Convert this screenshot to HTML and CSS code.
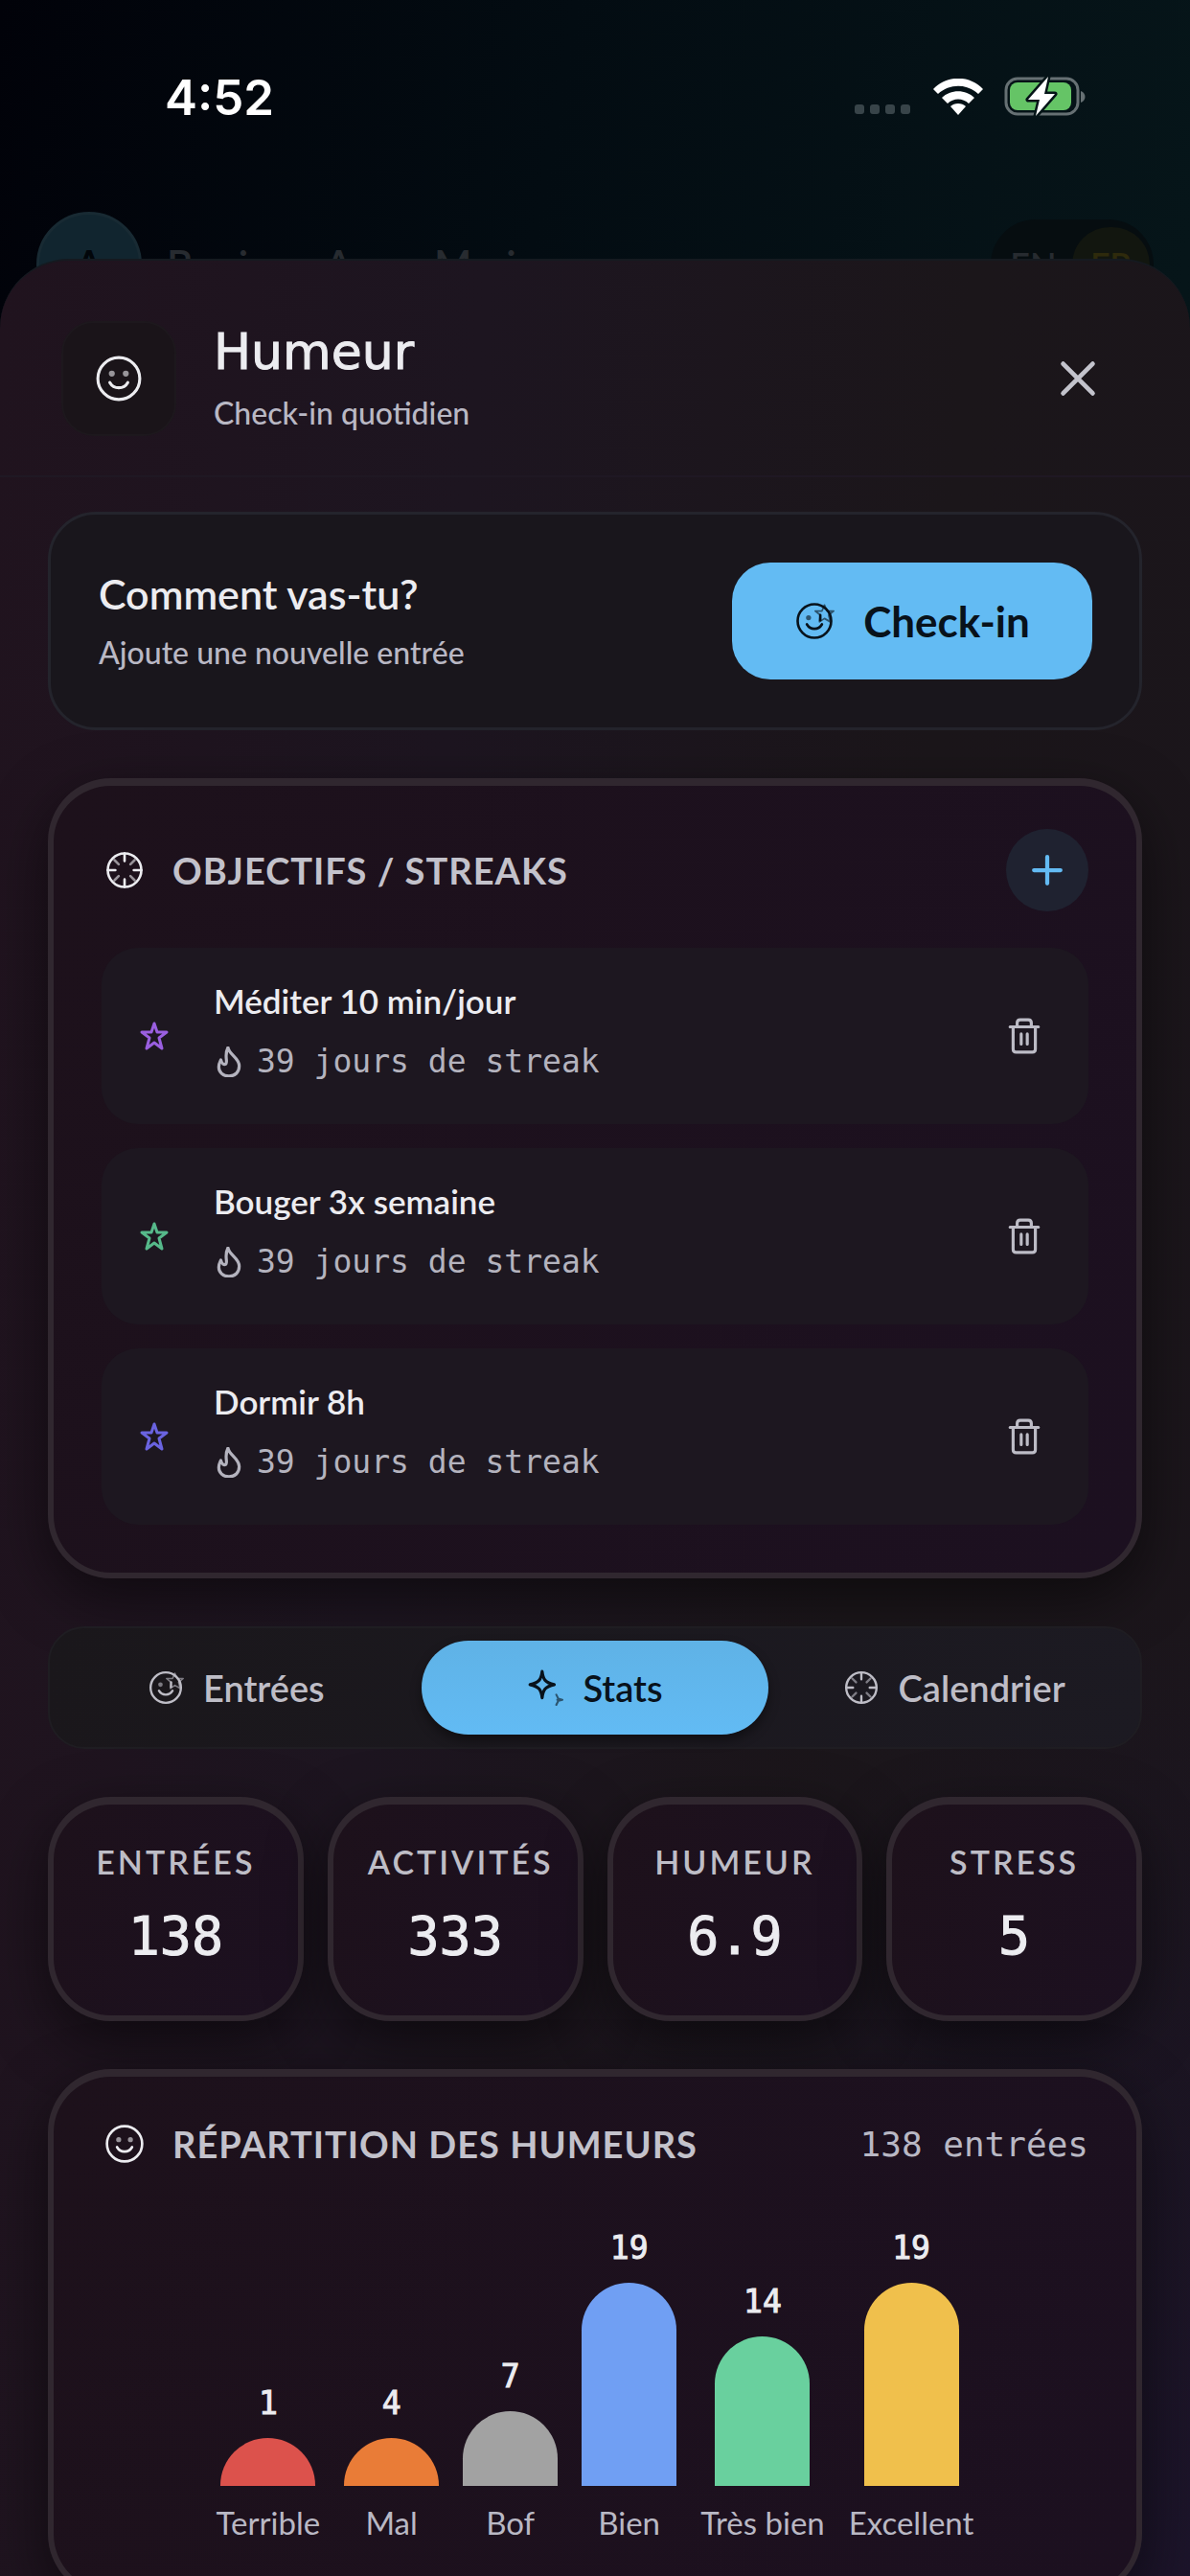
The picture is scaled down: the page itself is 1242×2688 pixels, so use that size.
FILE: index.html
```html
<!DOCTYPE html>
<html lang="fr">
  <head>
    <meta charset="utf-8">
    <meta name="viewport" content="width=device-width, initial-scale=1">
    <title>Humeur</title>
    <link rel="stylesheet" href="styles.css">
  </head>
  <body>
    <svg class="sprite" aria-hidden="true">
      <symbol id="smile" viewBox="0 0 48 48">
        <circle cx="24" cy="24" r="21" />
        <path d="M15 28c4 7 14 7 18 0" />
        <g class="dim"><circle class="fill" cx="17" cy="19" r="3" /><circle class="fill" cx="31" cy="19" r="3" /></g>
      </symbol>
      <symbol id="smile-star" viewBox="0 0 48 48">
        <circle cx="24" cy="24" r="20" />
        <path d="M15 28c4 7 14 7 18 0" />
        <circle class="fill dim" cx="17" cy="20" r="3" />
        <path d="M31 17v6" />
        <path class="thin" d="M36 5l3 7h8l-6 5 2 8-7-4-6 4 1-8-6-5h8z" />
      </symbol>
      <symbol id="dial" viewBox="0 0 48 48">
        <circle cx="24" cy="24" r="20" />
        <path d="M24 4v9M24 35v9M4 24h9M35 24h9" />
        <path class="dim" d="M12 12l5 5M36 12l-5 5M12 36l5-5M36 36l-5-5" />
      </symbol>
      <symbol id="star" viewBox="0 0 32 32">
        <path d="M16 3l3 9h10l-8 6 3 11-8-6-8 6 3-11-8-6h10z" />
      </symbol>
      <symbol id="flame" viewBox="0 0 24 30">
        <path d="M11 1c1 7 11 10 11 18 0 6-4 10-10 10S2 25 2 20c0-3 1-5 2-7 1 4 3 5 5 4 2-3-2-8 2-16z" />
      </symbol>
      <symbol id="trash" viewBox="0 0 32 36">
        <path d="M2 9h28M9 9V5c0-2 1-3 3-3h8c2 0 3 1 3 3v4M5 9v22c0 2 1 3 3 3h16c2 0 3-1 3-3V9M13 16v10M19 16v10" />
      </symbol>
      <symbol id="sparkle" viewBox="0 0 36 36">
        <path d="M15 2c1 8 3 11 12 13-9 2-11 5-12 13-1-8-3-11-12-13 9-2 11-5 12-13z" />
        <path class="thin" d="M29 25l2 4 4 1-4 1-2 4M31 30h-1" />
      </symbol>
    </svg>

    <div class="status-bar">
      <span class="time">4:52</span>
      <div class="status-icons">
        <span class="signal"><i></i><i></i><i></i><i></i></span>
        <svg class="wifi" viewBox="0 0 52 38">
          <path d="M0 11C14-4 38-4 52 11l-5 5C35 5 17 5 5 16z" />
          <path d="M9 20c9-9 25-9 34 0l-6 6c-6-6-16-6-22 0z" />
          <path d="M18 29c4-4 12-4 16 0l-8 9z" />
        </svg>
        <svg class="battery" viewBox="0 0 86 42">
          <rect class="shell" x="2" y="2" width="75" height="37" rx="12" />
          <path class="tip" d="M80 15c6 2 6 10 0 12z" />
          <rect class="level" x="6" y="6" width="64" height="29" rx="8" />
          <path class="bolt" d="M46 0L25 24h12l-4 17 20-23H42z" />
        </svg>
      </div>
    </div>

    <div class="home-header">
      <span class="avatar">A</span>
      <span class="greeting">Bonjour, Anne-Marie</span>
      <span class="lang"><span>EN</span><span class="lang-on">FR</span></span>
    </div>

    <main class="sheet">
      <header class="sheet-header">
        <span class="sheet-icon"><svg class="icon-lg"><use href="#smile" /></svg></span>
        <div class="sheet-title">
          <h1>Humeur</h1>
          <p>Check-in quotidien</p>
        </div>
        <button class="close" type="button" aria-label="Fermer">
          <svg viewBox="0 0 32 32"><path d="M3 3l26 26M29 3L3 29" /></svg>
        </button>
      </header>

      <div class="content">
        <section class="checkin">
          <div>
            <h2>Comment vas-tu?</h2>
            <p>Ajoute une nouvelle entrée</p>
          </div>
          <button class="checkin-btn" type="button"><svg class="icon"><use href="#smile-star" /></svg>Check-in</button>
        </section>

        <section class="card">
          <div class="card-header">
            <svg class="icon"><use href="#dial" /></svg>
            <h3>OBJECTIFS / STREAKS</h3>
            <button class="add" type="button" aria-label="Ajouter">
              <svg viewBox="0 0 32 32"><path d="M16 3v26M3 16h26" /></svg>
            </button>
          </div>
          <ul class="goals">
            <li class="goal">
              <svg class="star purple"><use href="#star" /></svg>
              <div class="goal-text">
                <h4>Méditer 10 min/jour</h4>
                <p><svg class="flame"><use href="#flame" /></svg>39 jours de streak</p>
              </div>
              <button class="delete" type="button" aria-label="Supprimer"><svg><use href="#trash" /></svg></button>
            </li>
            <li class="goal">
              <svg class="star green"><use href="#star" /></svg>
              <div class="goal-text">
                <h4>Bouger 3x semaine</h4>
                <p><svg class="flame"><use href="#flame" /></svg>39 jours de streak</p>
              </div>
              <button class="delete" type="button" aria-label="Supprimer"><svg><use href="#trash" /></svg></button>
            </li>
            <li class="goal">
              <svg class="star indigo"><use href="#star" /></svg>
              <div class="goal-text">
                <h4>Dormir 8h</h4>
                <p><svg class="flame"><use href="#flame" /></svg>39 jours de streak</p>
              </div>
              <button class="delete" type="button" aria-label="Supprimer"><svg><use href="#trash" /></svg></button>
            </li>
          </ul>
        </section>

        <nav class="tabs">
          <button type="button"><svg class="icon-sm"><use href="#smile-star" /></svg>Entrées</button>
          <button type="button" class="active"><svg class="icon-sm"><use href="#sparkle" /></svg>Stats</button>
          <button type="button"><svg class="icon-sm"><use href="#dial" /></svg>Calendrier</button>
        </nav>

        <section class="stats">
          <div class="card stat"><span>ENTRÉES</span><strong>138</strong></div>
          <div class="card stat"><span>ACTIVITÉS</span><strong>333</strong></div>
          <div class="card stat"><span>HUMEUR</span><strong>6.9</strong></div>
          <div class="card stat"><span>STRESS</span><strong>5</strong></div>
        </section>

        <section class="card moods">
          <div class="card-header">
            <svg class="icon"><use href="#smile" /></svg>
            <h3>RÉPARTITION DES HUMEURS</h3>
            <span class="total">138 entrées</span>
          </div>
          <div class="chart">
            <div class="col"><b>1</b><i class="bar terrible" style="height: 50px"></i><span>Terrible</span></div>
            <div class="col"><b>4</b><i class="bar mal" style="height: 50px"></i><span>Mal</span></div>
            <div class="col"><b>7</b><i class="bar bof" style="height: 78px"></i><span>Bof</span></div>
            <div class="col"><b>19</b><i class="bar bien" style="height: 212px"></i><span>Bien</span></div>
            <div class="col"><b>14</b><i class="bar tres-bien" style="height: 156px"></i><span>Très bien</span></div>
            <div class="col"><b>19</b><i class="bar excellent" style="height: 212px"></i><span>Excellent</span></div>
          </div>
        </section>
      </div>
    </main>
  </body>
</html>
```
FILE: styles.css
```css
* {
  box-sizing: border-box;
}
body {
  margin: 0;
  height: 100vh;
  display: flex;
  flex-direction: column;
  overflow: hidden;
  background: linear-gradient(100deg, #010209 0%, #030c12 35%, #061519 75%, #041216 100%);
  color: #ececf0;
  font-family: Lato, "Liberation Sans", sans-serif;
}
h1, h2, h3, h4, p, ul {
  margin: 0;
  padding: 0;
  font-weight: 500;
}
button {
  font: inherit;
  color: inherit;
  background: none;
  border: none;
  padding: 0;
  cursor: pointer;
}
svg {
  flex: none;
  fill: none;
  stroke: currentColor;
  stroke-width: 3;
  stroke-linecap: round;
  stroke-linejoin: round;
}
.sprite {
  position: absolute;
  width: 0;
  height: 0;
}
.dim {
  opacity: 0.6;
}
.fill {
  fill: currentColor;
  stroke: none;
}
.thin {
  stroke-width: 2;
  opacity: 0.6;
}

/* status bar */
.status-bar {
  display: flex;
  justify-content: space-between;
  align-items: center;
  height: 202px;
  flex: none;
  padding: 0 108px 0 172px;
  color: #fff;
}
.time {
  font-family: Inter, sans-serif;
  font-size: 51px;
  font-weight: 600;
}
.status-icons {
  display: flex;
  align-items: center;
}
.signal {
  display: flex;
  gap: 6px;
  margin: 26px 24px 0 0;
}
.signal i {
  width: 10px;
  height: 10px;
  border-radius: 3px;
  background: #384449;
}
.wifi {
  width: 52px;
  height: 38px;
  margin-right: 22px;
  fill: #fff;
  stroke: none;
}
.battery {
  width: 86px;
  height: 42px;
}
.shell {
  stroke: #667073;
}
.tip {
  fill: #667073;
  stroke: none;
}
.level {
  fill: #65c466;
  stroke: none;
}
.bolt {
  fill: #fff;
  stroke: #051417;
  stroke-width: 5;
  paint-order: stroke;
}

/* dimmed home screen behind the sheet */
.home-header {
  display: flex;
  align-items: center;
  flex: none;
  height: 148px;
  margin-bottom: -80px;
  padding: 0 38px;
  font-size: 42px;
  font-weight: 600;
  color: #272b30;
}
.avatar {
  width: 110px;
  height: 110px;
  border-radius: 50%;
  background: #11252f;
  border: 3px solid #182a33;
  text-align: center;
  line-height: 104px;
  color: #02060a;
}
.greeting {
  margin-left: 26px;
}
.lang {
  display: flex;
  align-items: center;
  margin-left: auto;
  width: 170px;
  height: 94px;
  border-radius: 47px;
  padding: 4px;
  background: #060d10;
  font-size: 36px;
}
.lang span {
  flex: 1;
  height: 78px;
  line-height: 78px;
  border-radius: 39px;
  text-align: center;
}
.lang .lang-on {
  background: #12160f;
  color: #2e2a0c;
}

/* sheet */
.sheet {
  position: relative;
  flex: 1;
  min-height: 0;
  overflow: hidden;
  border-radius: 72px 72px 0 0;
  border-top: 2px solid #151a20;
  background:
    radial-gradient(ellipse 800px 1000px at 100% 100%, rgba(28, 20, 44, 0.9), rgba(28, 20, 44, 0)),
    linear-gradient(95deg, #20131e 0%, #1d1520 35%, #1b161a 70%, #1b151b 100%);
}
.sheet-header {
  display: flex;
  align-items: center;
  height: 226px;
  padding: 22px 98px 0 64px;
  border-bottom: 2px solid #1f1823;
}
.sheet-icon {
  display: flex;
  align-items: center;
  justify-content: center;
  width: 120px;
  height: 120px;
  border: 2px solid #1d181d;
  border-radius: 34px;
  background: #1a1419;
}
.icon-lg {
  width: 50px;
  height: 50px;
}
.sheet-title {
  flex: 1;
  margin-left: 39px;
}
h1 {
  font-family: "DejaVu Sans", sans-serif;
  font-size: 52px;
  font-weight: 400;
  line-height: 60px;
  -webkit-text-stroke: 1px currentColor;
}
.sheet-title p,
.checkin p {
  font-size: 32px;
  line-height: 44px;
  color: #b9b8c4;
}
.sheet-title p {
  margin-top: 12px;
}
.close svg {
  display: block;
  width: 38px;
  height: 38px;
  stroke-width: 4;
  color: #c3c3cc;
}
.content {
  display: flex;
  flex-direction: column;
  gap: 50px;
  padding: 36px 50px;
}
.checkin {
  display: flex;
  justify-content: space-between;
  align-items: center;
  padding: 50px 49px 50px 50px;
  border: 3px solid #24242c;
  border-radius: 50px;
  background: #19161c;
}
h2 {
  font-size: 43px;
  font-weight: 600;
  line-height: 54px;
}
.checkin p {
  margin-top: 12px;
}
.checkin-btn {
  display: flex;
  align-items: center;
  justify-content: center;
  gap: 30px;
  width: 376px;
  height: 122px;
  border-radius: 40px;
  background: #63bbf3;
  color: #08121b;
  font-size: 44px;
  font-weight: 700;
}
.icon {
  width: 42px;
  height: 42px;
}
.icon-sm {
  width: 38px;
  height: 38px;
}

/* cards */
.card {
  padding: 44px 50px 50px;
  border: 6px solid #30272f;
  border-top-width: 8px;
  border-radius: 66px;
  background: linear-gradient(110deg, #1d111b, #1c1020 100%);
  box-shadow: 0 20px 60px rgba(0, 0, 0, 0.5);
}
.card-header {
  display: flex;
  align-items: center;
  min-height: 88px;
}
.card-header .icon {
  margin-left: 3px;
}
h3 {
  flex: 1;
  margin-left: 29px;
  font-size: 38px;
  font-weight: 700;
  letter-spacing: 1px;
  color: #c3c2cb;
}
.add {
  display: flex;
  align-items: center;
  justify-content: center;
  width: 86px;
  height: 86px;
  border-radius: 50%;
  background: #1f2230;
  color: #63bbf3;
}
.add svg {
  width: 34px;
  height: 34px;
  stroke-width: 4;
}
.goals {
  display: flex;
  flex-direction: column;
  gap: 25px;
  margin-top: 37px;
  list-style: none;
}
.goal {
  display: flex;
  align-items: center;
  height: 184px;
  padding: 0 50px 0 39px;
  border-radius: 38px;
  background: #1d1720;
}
.star {
  width: 32px;
  height: 32px;
}
.purple {
  color: #9a5fe0;
}
.green {
  color: #56b98a;
}
.indigo {
  color: #6a63e0;
}
.goal-text {
  flex: 1;
  margin-left: 46px;
}
h4 {
  font-size: 35px;
  font-weight: 600;
  line-height: 48px;
}
.goal-text p {
  display: flex;
  align-items: center;
  gap: 16px;
  margin: 18px 0 12px 3px;
  font-family: "DejaVu Sans Mono", monospace;
  font-size: 33px;
  line-height: 44px;
  color: #b4b3be;
}
.flame {
  width: 26px;
  height: 32px;
}
.delete {
  color: #bdbcc6;
}
.delete svg {
  display: block;
  width: 34px;
  height: 38px;
}

/* tabs */
.tabs {
  display: flex;
  gap: 12px;
  padding: 13px;
  border: 2px solid #1f1d22;
  border-radius: 38px;
  background: linear-gradient(100deg, #1a171b, #1c1a22);
}
.tabs button {
  display: flex;
  flex: 1;
  align-items: center;
  justify-content: center;
  gap: 20px;
  height: 98px;
  border-radius: 49px;
  font-size: 38px;
  font-weight: 600;
  color: #bebdc6;
}
.tabs .active {
  background: linear-gradient(#5fb2e6, #62bbf4);
  box-shadow: 0 6px 12px rgba(0, 0, 0, 0.4);
  color: #08121b;
}

/* stats */
.stats {
  display: grid;
  grid-template-columns: repeat(4, 1fr);
  gap: 25px;
}
.stat {
  min-width: 0;
  height: 234px;
  padding: 36px;
  text-align: center;
}
.stat span,
.stat strong {
  display: block;
}
.stat span {
  font-size: 34px;
  font-weight: 600;
  line-height: 48px;
  letter-spacing: 3px;
  color: #bebdc6;
}
.stat strong {
  margin-top: 20px;
  font-family: "DejaVu Sans Mono", monospace;
  font-size: 55px;
  font-weight: 400;
  line-height: 66px;
  -webkit-text-stroke: 1px currentColor;
}

/* chart */
.moods {
  padding-top: 26px;
}
.total {
  font-family: "DejaVu Sans Mono", monospace;
  font-size: 36px;
  color: #b9b8c4;
}
.chart {
  display: flex;
  justify-content: center;
  align-items: flex-end;
  gap: 25px;
  height: 373px;
}
.col {
  display: flex;
  flex-direction: column;
  align-items: center;
  min-width: 99px;
}
.col b {
  font-family: "DejaVu Sans Mono", monospace;
  font-size: 33px;
  font-weight: 400;
  line-height: 44px;
  -webkit-text-stroke: 1px currentColor;
}
.bar {
  width: 99px;
  margin: 14px 0 16px;
  border-radius: 50px 50px 0 0;
}
.col span {
  font-size: 33px;
  line-height: 44px;
  color: #b9b8c4;
}
.terrible {
  background: #dc524c;
}
.mal {
  background: #e97c37;
}
.bof {
  background: #a2a2a2;
}
.bien {
  background: #709ff3;
}
.tres-bien {
  background: #69d09e;
}
.excellent {
  background: #f0c04c;
}
```
